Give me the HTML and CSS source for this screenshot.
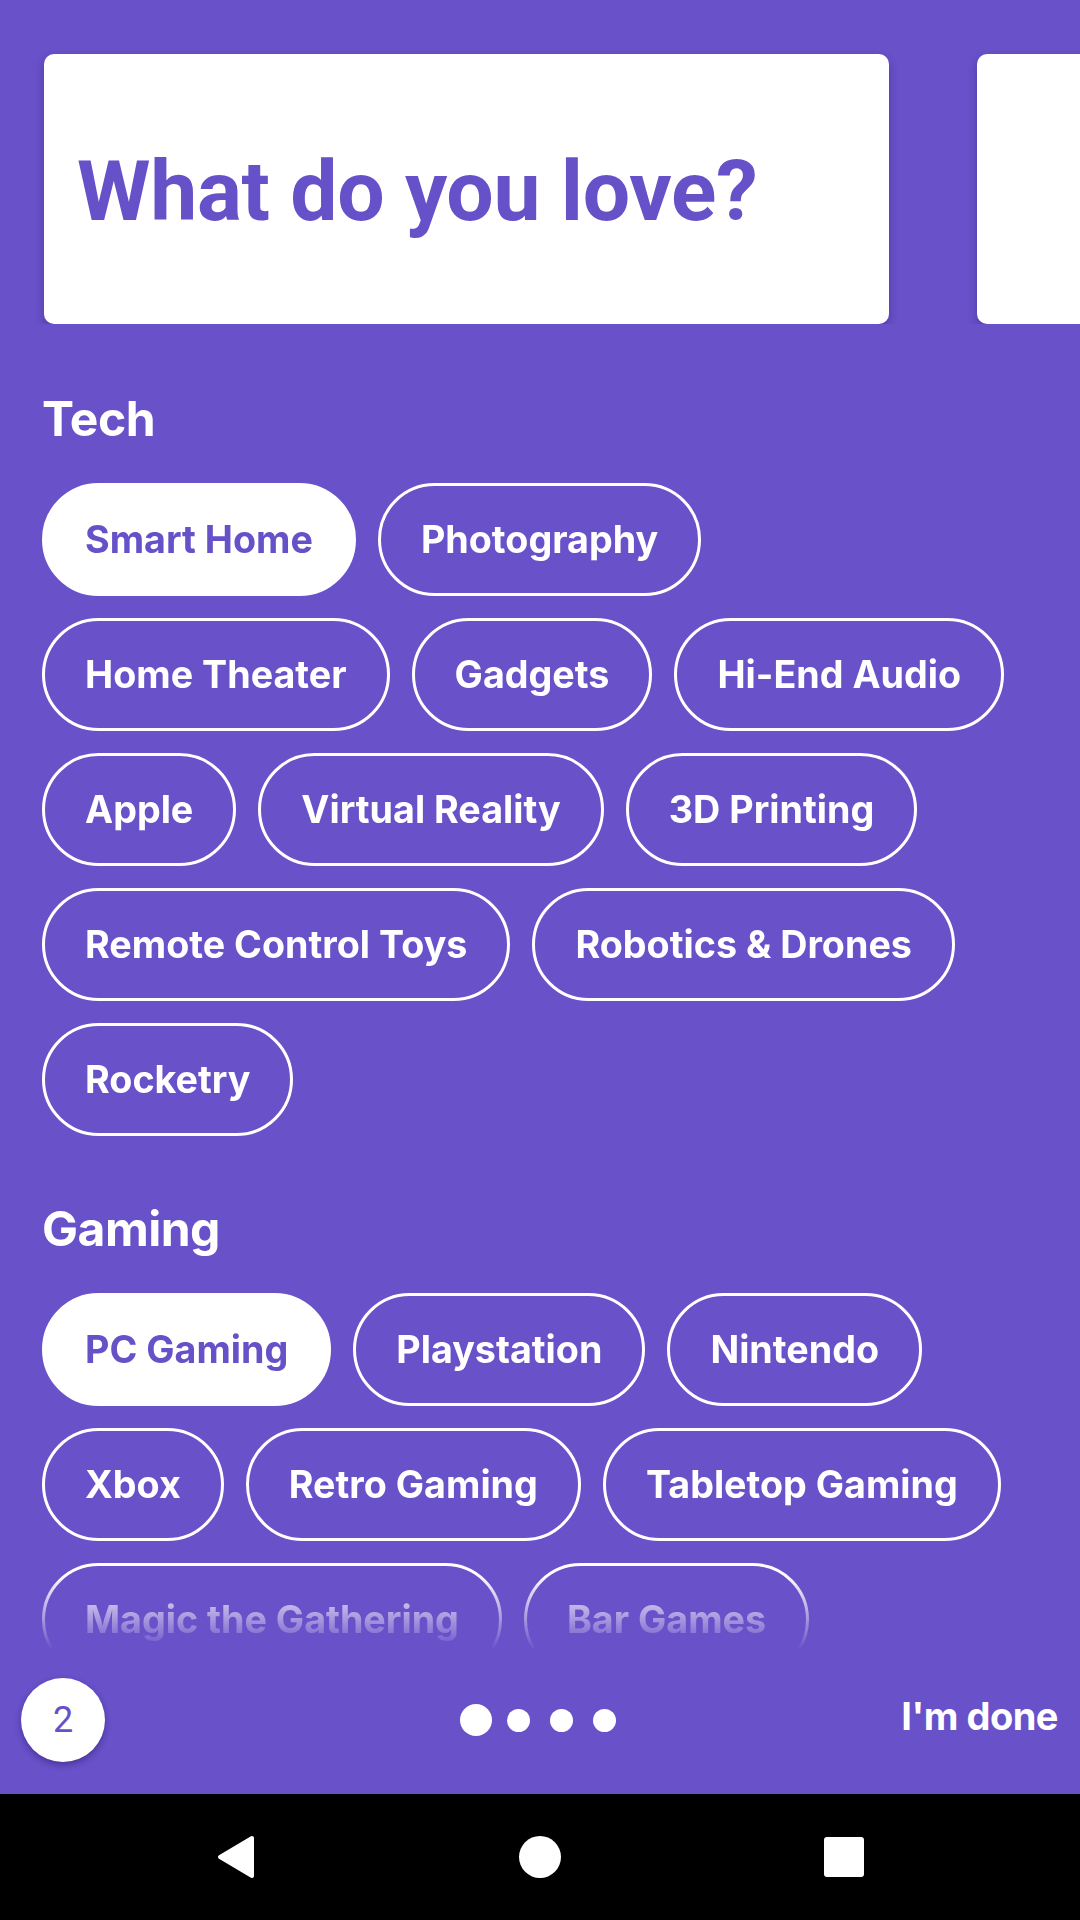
FILE: index.html
```html
<!DOCTYPE html>
<html lang="en">
<head>
<meta charset="utf-8">
<title>What do you love?</title>
<link rel="stylesheet" href="styles.css">
</head>
<body>
<div class="app">
  <main class="main">
    <div class="content">
      <div class="cards">
        <div class="card"><h1 class="card-title">What do you love?</h1></div>
        <div class="card"></div>
      </div>
      <div class="scroll">
        <section class="section">
          <h2 class="section-title">Tech</h2>
          <div class="chips">
            <span class="chip selected">Smart Home</span>
            <span class="chip">Photography</span>
            <span class="chip">Home Theater</span>
            <span class="chip">Gadgets</span>
            <span class="chip">Hi-End Audio</span>
            <span class="chip">Apple</span>
            <span class="chip">Virtual Reality</span>
            <span class="chip">3D Printing</span>
            <span class="chip">Remote Control Toys</span>
            <span class="chip">Robotics &amp; Drones</span>
            <span class="chip">Rocketry</span>
          </div>
        </section>
        <section class="section">
          <h2 class="section-title">Gaming</h2>
          <div class="chips">
            <span class="chip selected">PC Gaming</span>
            <span class="chip">Playstation</span>
            <span class="chip">Nintendo</span>
            <span class="chip">Xbox</span>
            <span class="chip">Retro Gaming</span>
            <span class="chip">Tabletop Gaming</span>
            <span class="chip">Magic the Gathering</span>
            <span class="chip">Bar Games</span>
          </div>
        </section>
      </div>
    </div>
    <div class="bottom-bar">
      <div class="bar-left"><span class="count">2</span></div>
      <div class="dots">
        <span class="dot-slot"><span class="dot big"></span></span>
        <span class="dot-slot"><span class="dot"></span></span>
        <span class="dot-slot"><span class="dot"></span></span>
        <span class="dot-slot"><span class="dot"></span></span>
      </div>
      <div class="bar-right"><span class="done">I'm done</span></div>
    </div>
  </main>
  <nav class="navbar">
    <span class="nav-item">
      <svg width="40" height="44" viewBox="0 0 40 44"><path d="M36 3 L4 22 L36 41 Z" fill="#fff" stroke="#fff" stroke-width="4" stroke-linejoin="round"/></svg>
    </span>
    <span class="nav-item"><span class="home"></span></span>
    <span class="nav-item"><span class="recent"></span></span>
  </nav>
</div>
</body>
</html>
```
FILE: styles.css
```css
* { box-sizing: border-box; }
html, body { margin: 0; padding: 0; }
body {
  width: 1080px;
  height: 1920px;
  overflow: hidden;
  background: #6851c9;
  font-family: Inter, "Noto Sans", sans-serif;
}
.app {
  display: flex;
  flex-direction: column;
  height: 1920px;
}
.main {
  height: 1794px;
  display: flex;
  flex-direction: column;
  background: #6851c9;
}
.content {
  height: 1650px;
  overflow: hidden;
  -webkit-mask-image: linear-gradient(to bottom, #000 1575px, rgba(0,0,0,0) 1650px);
  mask-image: linear-gradient(to bottom, #000 1575px, rgba(0,0,0,0) 1650px);
}
.cards {
  display: flex;
  gap: 88px;
  padding: 54px 0 0 44px;
  overflow: hidden;
  width: 1080px;
}
.card {
  flex: 0 0 845px;
  height: 270px;
  background: #fff;
  border-radius: 10px;
  box-shadow: 0 4px 8px rgba(40, 20, 100, 0.35);
  display: flex;
  align-items: center;
  padding-left: 33px;
}
.card-title {
  margin: 0;
  font-family: Roboto, "Liberation Sans", sans-serif;
  font-weight: 700;
  font-size: 84px;
  line-height: 1;
  color: #6651c8;
  letter-spacing: -0.3px;
  padding-top: 6px;
}
.scroll {
  padding: 0 0 0 42px;
}
.section { margin-top: 66px; }
.section + .section { margin-top: 64px; }
.section-title {
  margin: 0 0 35px 0;
  font-size: 48px;
  line-height: 58px;
  font-weight: 700;
  color: #fff;
  letter-spacing: -0.5px;
}
.chips {
  display: flex;
  flex-wrap: wrap;
  gap: 22px 22px;
  width: 1010px;
}
.chip {
  display: inline-flex;
  align-items: center;
  height: 113px;
  padding: 0 40px;
  border: 3px solid #fff;
  border-radius: 57px;
  color: #fff;
  font-size: 37.7px;
  font-weight: 700;
  line-height: 1;
  letter-spacing: 0;
  white-space: nowrap;
}
.chip.selected {
  background: #fff;
  color: #6651c8;
}
.bottom-bar {
  height: 144px;
  padding-bottom: 4px;
  display: grid;
  grid-template-columns: 1fr auto 1fr;
  align-items: center;
}
.bar-left { padding-left: 21px; display: flex; }
.count {
  width: 84px;
  height: 84px;
  border-radius: 50%;
  background: #fff;
  box-shadow: 0 3px 6px rgba(30, 10, 80, 0.4);
  display: flex;
  align-items: center;
  justify-content: center;
  font-family: Roboto, "Liberation Sans", sans-serif;
  font-size: 36px;
  color: #6651c8;
}
.dots { display: flex; align-items: center; }
.dot-slot {
  width: 43px;
  display: flex;
  justify-content: center;
}
.dot {
  width: 23px;
  height: 23px;
  border-radius: 50%;
  background: #fff;
}
.dot.big { width: 32px; height: 32px; }
.bar-right {
  display: flex;
  justify-content: flex-end;
  padding-right: 22px;
}
.done {
  color: #fff;
  font-size: 38px;
  font-weight: 700;
  letter-spacing: -0.5px;
  padding-bottom: 8px;
}
.navbar {
  height: 126px;
  background: #000;
  display: flex;
  align-items: center;
  justify-content: center;
  gap: 262px;
}
.nav-item {
  width: 42px;
  height: 44px;
  display: flex;
  align-items: center;
  justify-content: center;
}
.home {
  width: 42px;
  height: 42px;
  border-radius: 50%;
  background: #fff;
}
.recent {
  width: 40px;
  height: 40px;
  border-radius: 3px;
  background: #fff;
}
```
